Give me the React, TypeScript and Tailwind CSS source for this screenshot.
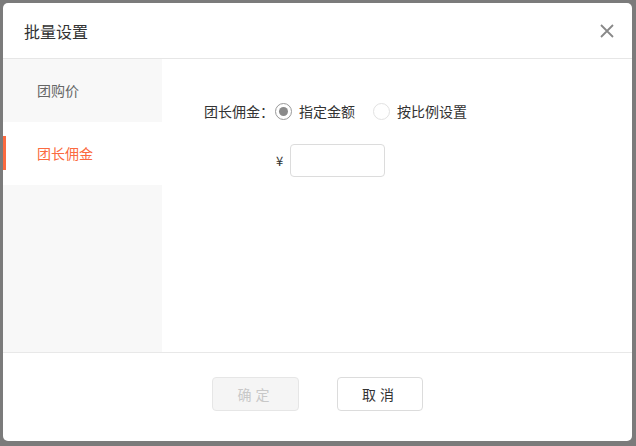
import React from 'react';

const font = { fontFamily: '"Noto Sans CJK SC", "Liberation Sans", sans-serif' };

function Radio({ checked, label }: { checked?: boolean; label: string }) {
  return (
    <label className="flex items-center gap-[7px] text-[14px] text-[#333]">
      <span
        className={
          'flex h-[17px] w-[17px] items-center justify-center rounded-full border bg-white ' +
          (checked ? 'border-[#999]' : 'border-[#e2e2e2]')
        }
      >
        {checked && <span className="h-[9px] w-[9px] rounded-full bg-[#8a8a8a]" />}
      </span>
      {label}
    </label>
  );
}

export default function App() {
  const [tab, setTab] = React.useState(1);
  const tabs = ['团购价', '团长佣金'];

  return (
    <div className="h-[446px] w-[636px] bg-[#7b7b7b] pl-[3px] pt-[3px]" style={font}>
      <div className="flex h-[438px] w-[629px] flex-col overflow-hidden rounded-[5px] bg-white">
        <div className="flex h-[56px] shrink-0 items-center justify-between border-b border-[#e6e6e6] pl-[21px] pr-[17px]">
          <span className="text-[16px] text-[#333]">批量设置</span>
          <svg width="16" height="16" viewBox="0 0 16 16" className="text-[#888]">
            <path d="M2 2L14 14M14 2L2 14" stroke="currentColor" strokeWidth="1.8" />
          </svg>
        </div>

        <div className="flex h-[293px] shrink-0">
          <div className="w-[159px] bg-[#f8f8f8]">
            {tabs.map((t, i) => (
              <div
                key={t}
                onClick={() => setTab(i)}
                className={
                  'relative flex h-[63px] cursor-pointer items-center pl-[34px] text-[14px] ' +
                  (tab === i ? 'bg-white text-[#fb6a40]' : 'text-[#666]')
                }
              >
                {tab === i && <span className="absolute left-0 top-[14px] h-[34px] w-[3px] bg-[#fb6a40]" />}
                {t}
              </div>
            ))}
          </div>

          <div className="flex-1 pt-[42px]">
            <div className="flex items-center pl-[42px]">
              <span className="mr-[1px] text-[14px] text-[#333]">团长佣金：</span>
              <Radio checked label="指定金额" />
              <div className="w-[18px]" />
              <Radio label="按比例设置" />
            </div>
            <div className="mt-[22px] flex items-center pl-[114px]">
              <span className="mr-[7px] text-[13px] text-[#333]">¥</span>
              <input className="h-[33px] w-[95px] rounded-[4px] border border-[#dcdcdc] outline-none" />
            </div>
          </div>
        </div>

        <div className="flex flex-1 justify-center gap-[38px] border-t border-[#e8e8e8] pt-[24px]">
          <button
            disabled
            className="h-[34px] w-[87px] rounded-[4px] border border-[#e6e6e6] bg-[#f5f5f5] text-[14px] tracking-[4px] text-[#c8c8c8]"
          >
            确定
          </button>
          <button className="h-[34px] w-[86px] rounded-[4px] border border-[#dcdcdc] bg-white text-[14px] tracking-[4px] text-[#333]">
            取消
          </button>
        </div>
      </div>
    </div>
  );
}
